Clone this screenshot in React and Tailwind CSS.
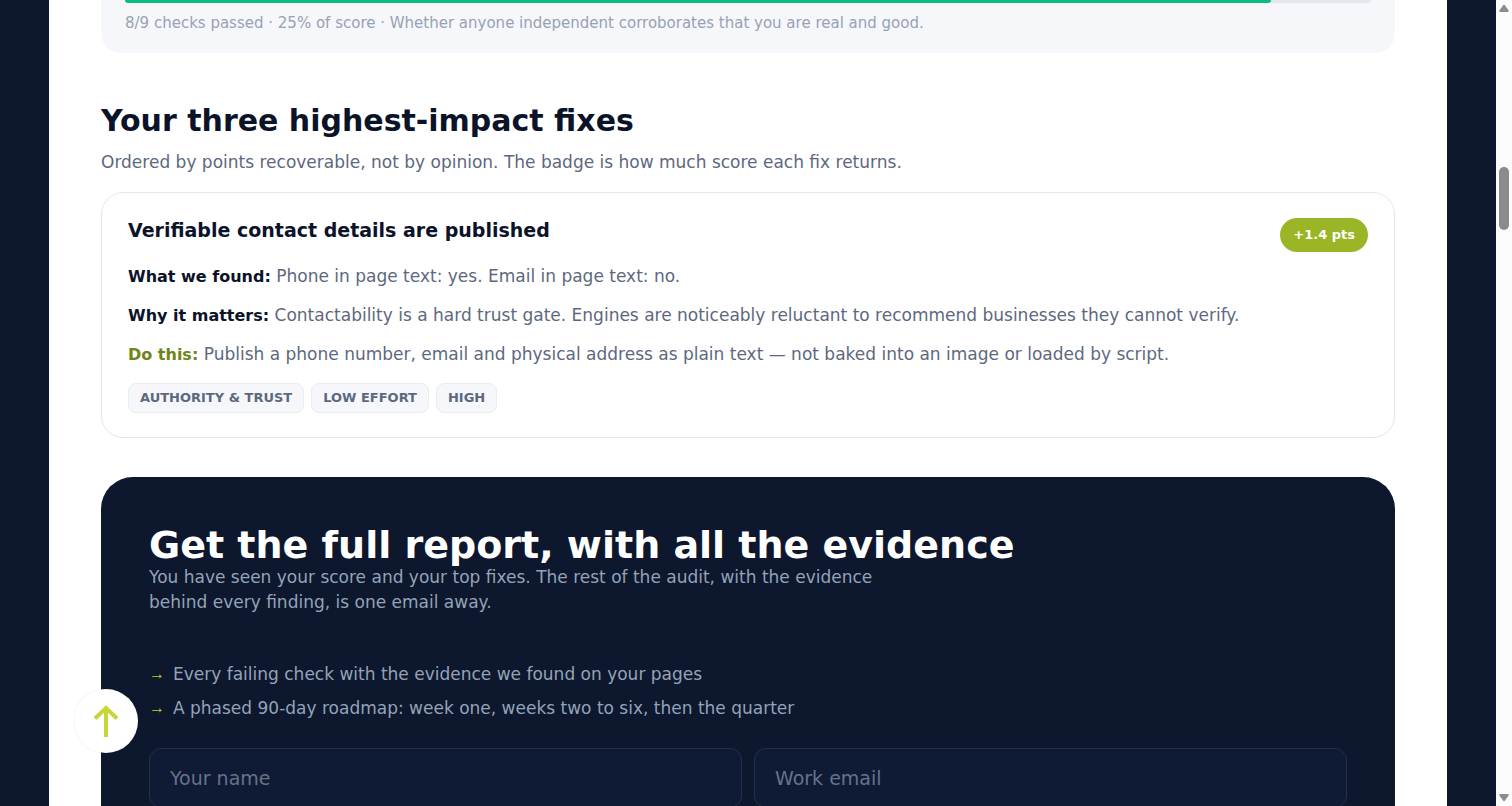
import React from "react";

const findings = [
  {
    label: "What we found:",
    text: "Phone in page text: yes. Email in page text: no.",
    labelClass: "text-base leading-6 text-[#0b1329]",
  },
  {
    label: "Why it matters:",
    text: "Contactability is a hard trust gate. Engines are noticeably reluctant to recommend businesses they cannot verify.",
    labelClass: "text-base leading-6 text-[#0b1329]",
  },
  {
    label: "Do this:",
    text: "Publish a phone number, email and physical address as plain text — not baked into an image or loaded by script.",
    labelClass: "text-base leading-6 text-[#6f8518]",
  },
];

const tags = ["AUTHORITY & TRUST", "LOW EFFORT", "HIGH"];

const perks = [
  "Every failing check with the evidence we found on your pages",
  "A phased 90-day roadmap: week one, weeks two to six, then the quarter",
];

const ScoreCard = ({ percent }) => (
  <section className="rounded-b-[20px] bg-[#f5f7fb] px-6 pb-5">
    <div className="h-[3px] overflow-hidden rounded-b-sm bg-[#e4e7ec]">
      <div
        className="h-full rounded-br-sm bg-[#0bba83]"
        style={{ width: `${percent}%` }}
      />
    </div>
    <p className="pt-[10px] text-[15px] leading-5 text-[#98a2b3]">
      8/9 checks passed · 25% of score · Whether anyone independent corroborates
      that you are real and good.
    </p>
  </section>
);

const FixCard = () => (
  <article className="mt-[18px] rounded-[22px] border border-[#e4e7ec] px-[26px] pt-[25px] pb-6">
    <div className="flex items-start justify-between">
      <h3 className="text-[19px] leading-6 font-bold text-[#0b1329]">
        Verifiable contact details are published
      </h3>
      <span className="rounded-full bg-[#9ab525] px-[13px] text-[13px] leading-[34px] font-bold text-white">
        +1.4 pts
      </span>
    </div>
    <div className="mt-3 flex flex-col gap-[14px] text-[17px] leading-6 text-[#5d6880]">
      {findings.map((f) => (
        <p key={f.label}>
          <strong className={f.labelClass}>{f.label}</strong> {f.text}
        </p>
      ))}
    </div>
    <ul className="mt-4 flex gap-[7px]">
      {tags.map((tag) => (
        <li
          key={tag}
          className="rounded-lg border border-[#e9ecf2] bg-[#f5f7fb] px-[11px] text-[13px] leading-7 font-bold text-[#5d6880]"
        >
          {tag}
        </li>
      ))}
    </ul>
  </article>
);

const ReportForm = () => (
  <section className="mt-[39px] rounded-t-[32px] bg-[#0d172d] px-12 pt-12 pb-12">
    <h2 className="text-[38px] leading-10 font-bold text-white">
      Get the full report, with all the evidence
    </h2>
    <p className="max-w-[760px] text-[17px] leading-[25px] text-[#94a3b8]">
      You have seen your score and your top fixes. The rest of the audit, with
      the evidence behind every finding, is one email away.
    </p>
    <ul className="mt-[46px] flex flex-col gap-2 text-[17px] leading-[26px] text-[#94a3b8]">
      {perks.map((perk) => (
        <li key={perk} className="flex gap-2">
          <span className="font-['Liberation_Sans',sans-serif] text-base leading-[26px] text-[#b3d42a]">
            →
          </span>
          {perk}
        </li>
      ))}
    </ul>
    <form className="mt-[27px] grid grid-cols-2 gap-3">
      <input
        type="text"
        aria-label="Your name"
        placeholder="Your name"
        className="h-[60px] min-w-0 rounded-xl border border-[#253049] bg-[#0f1a35] px-5 text-[19px] text-white placeholder:text-[#66728a]"
      />
      <input
        type="email"
        aria-label="Work email"
        placeholder="Work email"
        className="h-[60px] min-w-0 rounded-xl border border-[#253049] bg-[#0f1a35] px-5 text-[19px] text-white placeholder:text-[#66728a]"
      />
    </form>
  </section>
);

const ScrollTrack = () => (
  <div className="flex w-4 shrink-0 flex-col items-center bg-[#fcfcfc]">
    <svg width="16" height="16" viewBox="0 0 16 16" fill="#8b8b8b">
      <path d="M7.2 5.3Q8 4.4 8.8 5.3L12.6 10.6Q13.1 12 12 12H4Q2.9 12 3.4 10.6Z" />
    </svg>
    <div className="mt-[151px] h-[63px] w-[10px] rounded-full bg-[#8b8b8b]" />
    <svg
      className="mt-auto"
      width="16"
      height="16"
      viewBox="0 0 16 16"
      fill="#8b8b8b"
    >
      <path d="M7.2 10.7Q8 11.6 8.8 10.7L12.6 5.4Q13.1 4 12 4H4Q2.9 4 3.4 5.4Z" />
    </svg>
  </div>
);

const App = () => {
  return (
    <div className="flex h-screen overflow-hidden bg-[#0d172d] font-['DejaVu_Sans',sans-serif]">
      <div className="min-w-0 flex-1 px-[49px]">
        <main className="min-h-full bg-white px-[52px]">
          <ScoreCard percent={92} />

          <section className="mt-12">
            <h2 className="text-3xl leading-10 font-bold text-[#0b1329]">
              Your three highest-impact fixes
            </h2>
            <p className="mt-[9px] text-[17px] leading-6 text-[#5d6880]">
              Ordered by points recoverable, not by opinion. The badge is how
              much score each fix returns.
            </p>
            <FixCard />
          </section>

          <ReportForm />
        </main>
      </div>

      <ScrollTrack />

      <button
        type="button"
        aria-label="Back to top"
        className="fixed bottom-[53px] left-[74px] flex size-16 items-center justify-center rounded-full bg-white shadow-[0_0_2px_rgba(15,23,42,0.1)]"
      >
        <svg
          width="28"
          height="34"
          viewBox="0 0 28 34"
          fill="none"
          stroke="#c8d638"
          strokeWidth="4"
        >
          <path d="M14 33V4" />
          <path d="M3 14.5L14 4L25 14.5" />
        </svg>
      </button>
    </div>
  );
};

export default App;
